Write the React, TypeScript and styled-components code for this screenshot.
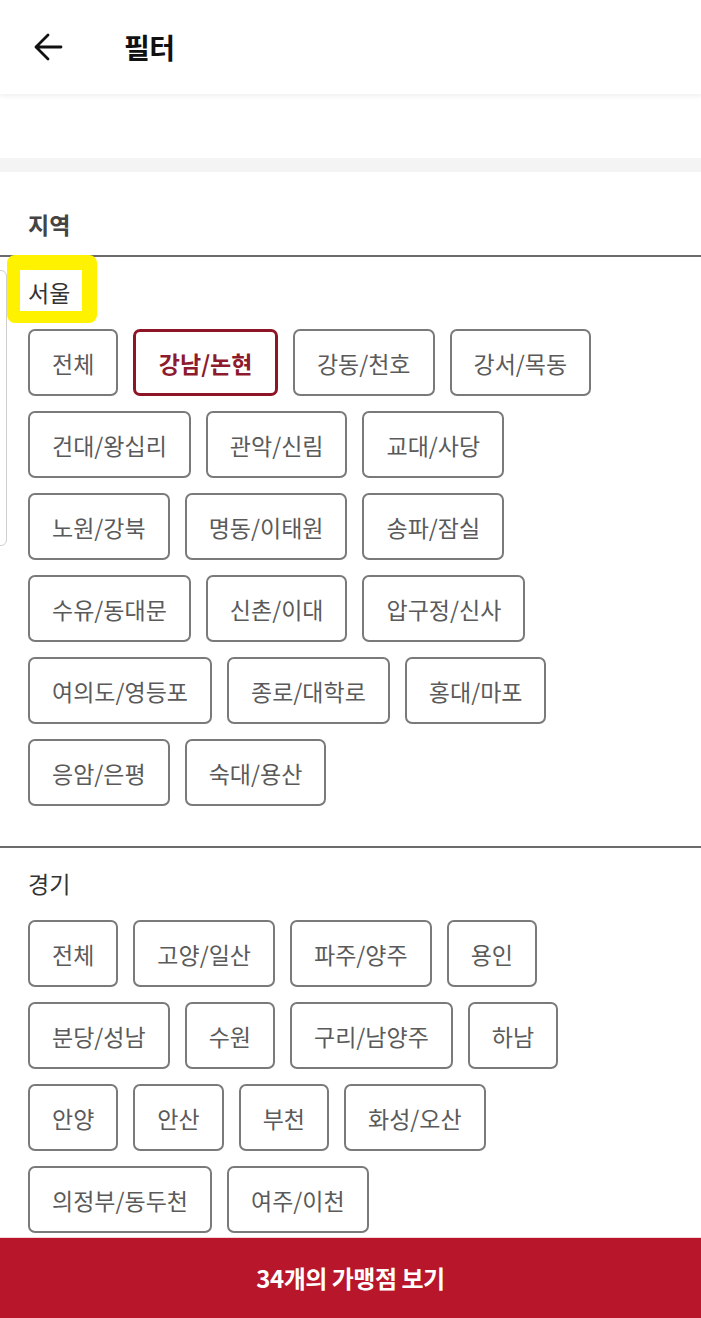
import React from "react";
import styled, { createGlobalStyle, css } from "styled-components";

const GlobalStyle = createGlobalStyle`
  *, *::before, *::after { box-sizing: border-box; }
  html, body { margin: 0; padding: 0; background: #ffffff; }
  body {
    font-family: "Noto Sans CJK KR", "Noto Sans", "Liberation Sans", sans-serif;
    -webkit-font-smoothing: antialiased;
  }
`;

const Page = styled.div`
  position: relative;
  width: 701px;
  height: 1318px;
  overflow: hidden;
  background: #ffffff;
  display: flex;
  flex-direction: column;
`;

const Header = styled.header`
  position: relative;
  z-index: 2;
  height: 94px;
  flex: none;
  display: flex;
  align-items: center;
  padding-left: 33px;
  background: #ffffff;
  box-shadow: 0 2px 5px rgba(0, 0, 0, 0.07);
`;

const BackButton = styled.button`
  width: 30px;
  height: 30px;
  padding: 0;
  margin: 0 61px 0 0;
  border: none;
  background: transparent;
  display: flex;
  align-items: center;
  justify-content: center;
  cursor: pointer;
`;

const Title = styled.h1`
  margin: 0;
  font-size: 28px;
  line-height: 36px;
  font-weight: 700;
  color: #111111;
  letter-spacing: -0.5px;
`;

const Spacer = styled.div`
  height: 64px;
  flex: none;
`;

const Band = styled.div`
  height: 14px;
  flex: none;
  background: #f4f4f4;
`;

const SectionTitle = styled.h2`
  margin: 0;
  padding: 36px 28px 15px;
  font-size: 23px;
  line-height: 32px;
  font-weight: 700;
  color: #444444;
`;

const RegionBlock = styled.section`
  border-top: 2px solid #6b6b6b;
  padding: 19px 60px 40px 28px;
`;

const RegionLabel = styled.div<{ $highlighted?: boolean }>`
  position: relative;
  display: inline-block;
  font-size: 23px;
  line-height: 32px;
  font-weight: 400;
  color: #333333;
  ${(p) =>
    p.$highlighted &&
    css`
      &::after {
        content: "";
        position: absolute;
        left: -21px;
        top: -21px;
        width: 90px;
        height: 68px;
        border-style: solid;
        border-color: #fff200;
        border-width: 15px 15px 12px 13px;
        border-radius: 8px;
        pointer-events: none;
      }
    `}
`;

const ChipGrid = styled.div`
  margin-top: 21px;
  display: flex;
  flex-wrap: wrap;
  gap: 15px;
`;

const Chip = styled.button<{ $active?: boolean }>`
  height: 67px;
  padding: 0 22px;
  border: 2px solid #7a7a7a;
  border-radius: 7px;
  background: #ffffff;
  font-family: inherit;
  font-size: 23px;
  font-weight: 400;
  color: #5a5a5a;
  white-space: nowrap;
  cursor: pointer;
  ${(p) =>
    p.$active &&
    css`
      border: 3px solid #8e1526;
      padding: 0 22.5px;
      font-weight: 700;
      color: #8e1a2e;
    `}
`;

const EdgeCard = styled.div`
  position: absolute;
  left: -20px;
  top: 270px;
  width: 27px;
  height: 276px;
  border: 1px solid #cfcfcf;
  border-radius: 6px;
  pointer-events: none;
`;

const BottomBar = styled.button`
  position: absolute;
  left: 0;
  right: 0;
  bottom: 0;
  height: 81px;
  border: none;
  border-top: 1px solid #f3d6da;
  background: #b8162a;
  color: #ffffff;
  font-family: inherit;
  font-size: 24px;
  font-weight: 700;
  letter-spacing: -0.5px;
  display: flex;
  align-items: center;
  justify-content: center;
  padding-bottom: 2px;
  cursor: pointer;
`;

type Region = { name: string; highlighted?: boolean; areas: string[]; active?: string };

const regions: Region[] = [
  {
    name: "서울",
    highlighted: true,
    active: "강남/논현",
    areas: [
      "전체",
      "강남/논현",
      "강동/천호",
      "강서/목동",
      "건대/왕십리",
      "관악/신림",
      "교대/사당",
      "노원/강북",
      "명동/이태원",
      "송파/잠실",
      "수유/동대문",
      "신촌/이대",
      "압구정/신사",
      "여의도/영등포",
      "종로/대학로",
      "홍대/마포",
      "응암/은평",
      "숙대/용산",
    ],
  },
  {
    name: "경기",
    areas: [
      "전체",
      "고양/일산",
      "파주/양주",
      "용인",
      "분당/성남",
      "수원",
      "구리/남양주",
      "하남",
      "안양",
      "안산",
      "부천",
      "화성/오산",
      "의정부/동두천",
      "여주/이천",
    ],
  },
];

const ArrowIcon = () => (
  <svg width="30" height="28" viewBox="0 0 30 28" fill="none">
    <path
      d="M28 14H3M15 2L3 14L15 26"
      stroke="#111111"
      strokeWidth="2.8"
      strokeLinecap="round"
      strokeLinejoin="round"
    />
  </svg>
);

export default function App() {
  return (
    <>
      <GlobalStyle />
      <Page>
        <Header>
          <BackButton aria-label="뒤로">
            <ArrowIcon />
          </BackButton>
          <Title>필터</Title>
        </Header>
        <Spacer />
        <Band />
        <SectionTitle>지역</SectionTitle>
        {regions.map((r) => (
          <RegionBlock key={r.name}>
            <RegionLabel $highlighted={r.highlighted}>{r.name}</RegionLabel>
            <ChipGrid>
              {r.areas.map((a) => (
                <Chip key={a} $active={a === r.active}>
                  {a}
                </Chip>
              ))}
            </ChipGrid>
          </RegionBlock>
        ))}
        <EdgeCard />
        <BottomBar>34개의 가맹점 보기</BottomBar>
      </Page>
    </>
  );
}
